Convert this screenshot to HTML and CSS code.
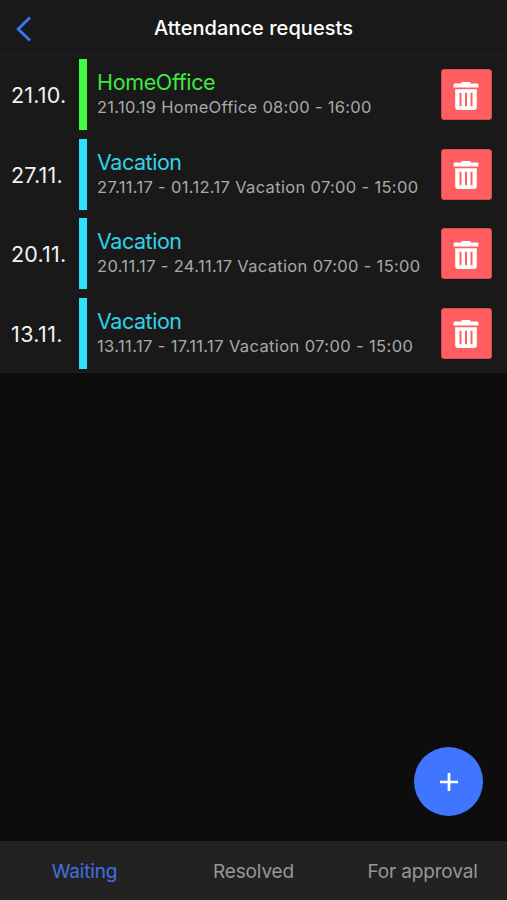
FILE: index.html
```html
<!DOCTYPE html>
<html lang="en">
<head>
<meta charset="utf-8">
<title>Attendance requests</title>
<link rel="stylesheet" href="styles.css">
</head>
<body>
<svg class="defs" width="0" height="0">
  <symbol id="trash" viewBox="0 0 26 30">
    <path fill="currentColor" fill-rule="evenodd" d="M8.500 2Q8.500 1 9.500 1H16.500Q17.500 1 17.500 2V2.500H24Q25.500 2.500 25.500 4V6.500H.5V4Q.5 2.500 2 2.500H8.500ZM2.200 8.200H23.800V26Q23.800 29 20.800 29H5.200Q2.200 29 2.200 26ZM6.500 11.700V25.200H8.500V11.700ZM12 11.700V25.200H14V11.700ZM17.500 11.700V25.200H19.500V11.700Z"/>
  </symbol>
</svg>
<div class="app">
  <header class="header">
    <button class="back" aria-label="Back"><svg width="16" height="26" viewBox="0 0 16 26"><path d="M14 1.500 2.200 13 14 24.500" fill="none" stroke="currentColor" stroke-width="3"/></svg></button>
    <h1 class="title">Attendance requests</h1>
  </header>
  <main class="list">
    <article class="row home">
      <time class="date">21.10.</time><span class="bar"></span>
      <div class="info"><h2 class="kind">HomeOffice</h2><p class="detail d1">21.10.19 HomeOffice 08:00 - 16:00</p></div>
      <button class="delete" aria-label="Delete"><svg class="trash"><use href="#trash"/></svg></button>
    </article>
    <article class="row vacation">
      <time class="date">27.11.</time><span class="bar"></span>
      <div class="info"><h2 class="kind">Vacation</h2><p class="detail d2">27.11.17 - 01.12.17 Vacation 07:00 - 15:00</p></div>
      <button class="delete" aria-label="Delete"><svg class="trash"><use href="#trash"/></svg></button>
    </article>
    <article class="row vacation">
      <time class="date">20.11.</time><span class="bar"></span>
      <div class="info"><h2 class="kind">Vacation</h2><p class="detail d3">20.11.17 - 24.11.17 Vacation 07:00 - 15:00</p></div>
      <button class="delete" aria-label="Delete"><svg class="trash"><use href="#trash"/></svg></button>
    </article>
    <article class="row vacation">
      <time class="date date-wide">13.11.</time><span class="bar"></span>
      <div class="info"><h2 class="kind">Vacation</h2><p class="detail d4">13.11.17 - 17.11.17 Vacation 07:00 - 15:00</p></div>
      <button class="delete" aria-label="Delete"><svg class="trash"><use href="#trash"/></svg></button>
    </article>
  </main>
  <button class="add" aria-label="Add request"><svg width="20" height="20" viewBox="0 0 20 20"><path d="M10 1V19M1 10H19" stroke="currentColor" stroke-width="2.700"/></svg></button>
  <nav class="tabs">
    <a class="tab active">Waiting</a>
    <a class="tab resolved">Resolved</a>
    <a class="tab approval">For approval</a>
  </nav>
</div>
</body>
</html>
```
FILE: styles.css
```css
* { box-sizing: border-box; }
body { margin: 0; background: #0d0d0d; font-family: Inter, "Liberation Sans", sans-serif; }
button { border: 0; padding: 0; margin: 0; background: none; }
h1, h2, p { margin: 0; font-weight: 400; white-space: nowrap; }
svg { display: block; }
.defs { position: absolute; }
.app { position: relative; height: 900px; display: flex; flex-direction: column; overflow: hidden; }
.header {
  height: 55px;
  flex: none;
  display: grid;
  grid-template-columns: 60px 1fr 60px;
  align-items: center;
  background: #191919;
  border-bottom: 1px solid #202020;
}
.back { color: #3c74ef; padding: 3px 0 0 16px; }
.title { color: #fff; font-size: 20px; font-weight: 500; letter-spacing: 0.04px; text-align: center; line-height: 24px; padding-top: 2px; }
.list { flex: 1; }
.row {
  height: 79.4px;
  display: flex;
  align-items: center;
  background: #191919;
  border-bottom: 1px solid #1d1d1d;
  padding: 1.500px 15px 0 11px;
}
.date { width: 68px; color: #f2f2f2; font-size: 21.500px; letter-spacing: 0.2px; line-height: 26px; padding-top: 1px; }
.date-wide { letter-spacing: 0.4px; }
.bar { width: 8px; height: 71px; background: currentColor; }
.home { color: #43fb43; }
.vacation { color: #2de2ff; }
.info { flex: 1; padding-left: 10px; }
.kind { font-size: 21.500px; line-height: 25px; letter-spacing: -0.45px; }
.home .kind { color: #3ee83f; letter-spacing: -0.35px; }
.vacation .kind { color: #30d2e8; }
.detail { font-size: 16.500px; line-height: 24px; color: #a9a9a9; }
.d1 { letter-spacing: 0.28px; }
.d2, .d3 { letter-spacing: 0.33px; }
.d4 { letter-spacing: 0.38px; }
.delete {
  width: 51px;
  height: 51px;
  display: flex;
  align-items: center;
  justify-content: center;
  border-radius: 3px;
  border: 1px solid #d94f51;
  background: #ff5f60;
  color: #fff;
}
.trash { width: 26px; height: 30px; margin: 2px 1px 0 0; }
.add {
  position: absolute;
  left: 414px;
  top: 747px;
  width: 69px;
  height: 69px;
  display: flex;
  align-items: center;
  justify-content: center;
  border-radius: 50%;
  background: #4076ff;
  color: #fff;
}
.tabs {
  height: 59px;
  flex: none;
  display: grid;
  grid-template-columns: repeat(3, 1fr);
  align-items: center;
  background: #222;
}
.tab { color: #979797; font-size: 19px; letter-spacing: -0.15px; line-height: 24px; text-align: center; padding-top: 2px; }
.active { color: #426fe0; }
```
